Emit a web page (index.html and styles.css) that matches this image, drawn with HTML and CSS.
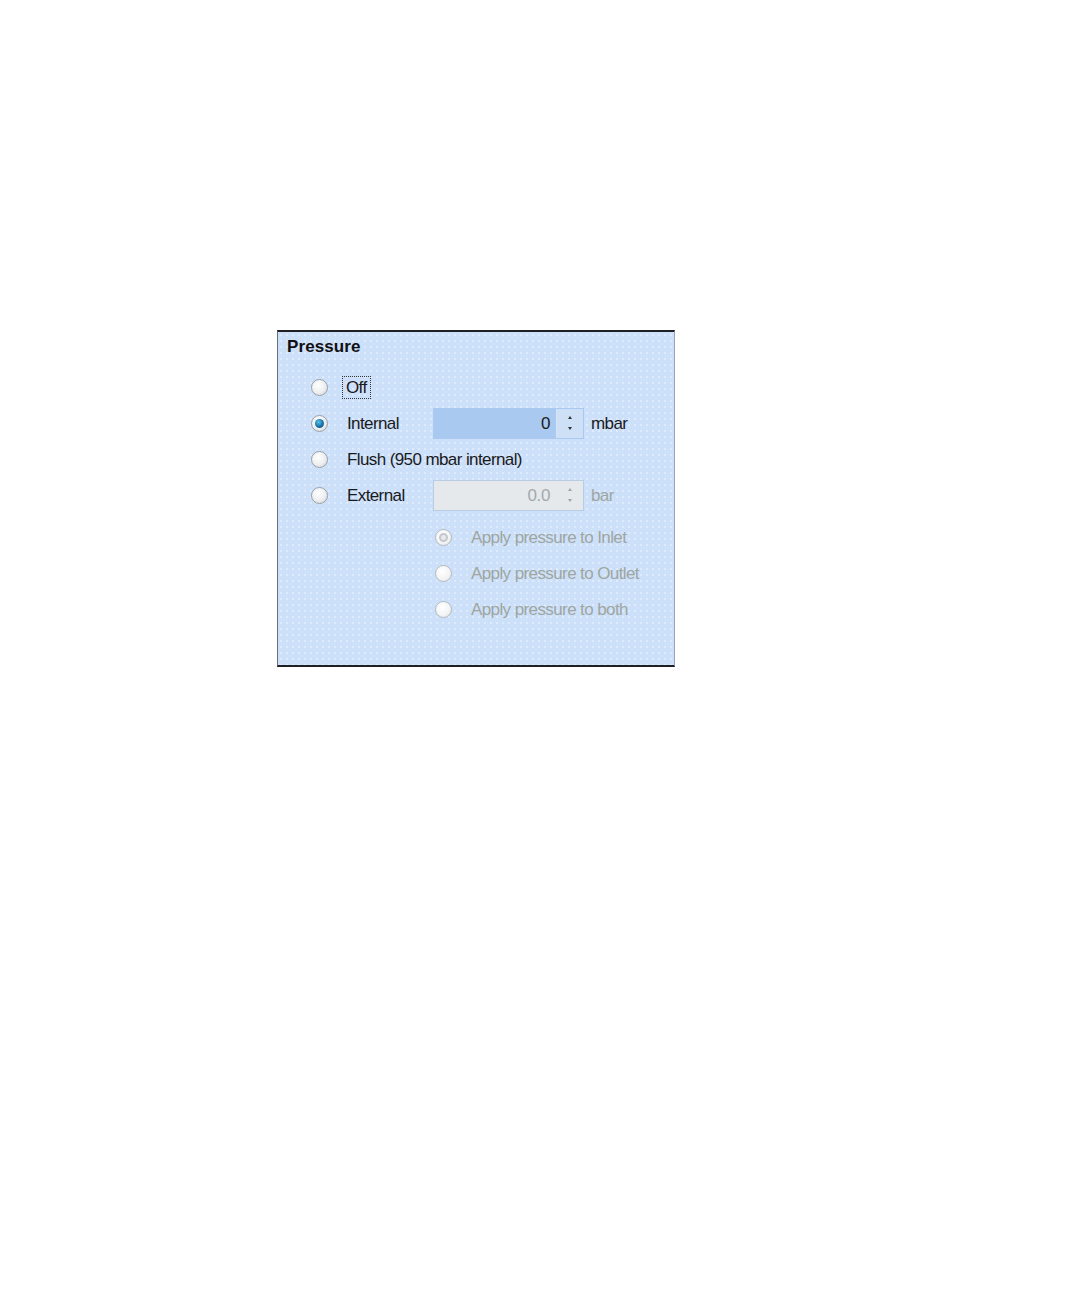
FILE: index.html
```html
<!DOCTYPE html>
<html>
<head>
<meta charset="utf-8">
<link rel="stylesheet" href="styles.css">
</head>
<body>
<div class="page">
  <section class="group">
    <h2 class="title">Pressure</h2>
    <div class="rows">
      <div class="row">
        <span class="radio"></span>
        <span class="label focus">Off</span>
      </div>
      <div class="row">
        <span class="radio checked"></span>
        <span class="label fixed">Internal</span>
        <div class="spin active">
          <span class="value">0</span>
          <span class="arrows"><i class="up"></i><i class="down"></i></span>
        </div>
        <span class="unit">mbar</span>
      </div>
      <div class="row">
        <span class="radio"></span>
        <span class="label">Flush (950 mbar internal)</span>
      </div>
      <div class="row">
        <span class="radio"></span>
        <span class="label fixed">External</span>
        <div class="spin disabled">
          <span class="value">0.0</span>
          <span class="arrows"><i class="up"></i><i class="down"></i></span>
        </div>
        <span class="unit dim">bar</span>
      </div>
    </div>
    <div class="subrows">
      <div class="row">
        <span class="radio dis checked-dis"></span>
        <span class="label dim">Apply pressure to Inlet</span>
      </div>
      <div class="row">
        <span class="radio dis"></span>
        <span class="label dim">Apply pressure to Outlet</span>
      </div>
      <div class="row">
        <span class="radio dis"></span>
        <span class="label dim">Apply pressure to both</span>
      </div>
    </div>
  </section>
</div>
</body>
</html>
```
FILE: styles.css
```css
html, body {
  margin: 0;
  padding: 0;
  background: #ffffff;
}
body {
  font-family: "Liberation Sans", Arial, sans-serif;
  color: #1a1a1a;
}
.page {
  padding: 330px 0 0 277px;
}
.group {
  box-sizing: border-box;
  width: 398px;
  height: 337px;
  border-top: 2px solid #1e2024;
  border-bottom: 2px solid #1e2024;
  border-left: 1px solid #6a707a;
  border-right: 1px solid #9aa4b0;
  background-color: #cde0fa;
  background-image: radial-gradient(circle, rgba(255,255,255,0.35) 0.8px, transparent 1.2px);
  background-size: 6px 6px;
  padding: 4px 0 0 9px;
}
.title {
  margin: 0;
  font-size: 17px;
  font-weight: bold;
  line-height: 22px;
  letter-spacing: 0.1px;
  color: #111;
}
.rows {
  margin-top: 13px;
  padding-left: 24px;
  display: flex;
  flex-direction: column;
  gap: 4px;
}
.row {
  display: flex;
  align-items: center;
  height: 32px;
}
.radio {
  box-sizing: border-box;
  width: 17px;
  height: 17px;
  border-radius: 50%;
  border: 1px solid #9aa0a6;
  background: radial-gradient(circle at 40% 35%, #ffffff 0%, #eceef0 55%, #cfd3d8 100%);
  flex: none;
  position: relative;
}
.radio.checked::after {
  content: "";
  position: absolute;
  left: 3px;
  top: 3px;
  width: 9px;
  height: 9px;
  border-radius: 50%;
  background: radial-gradient(circle at 40% 35%, #5fc0e8 0%, #1a78b0 50%, #0b3f66 100%);
}
.radio.dis {
  border-color: #b4bac0;
  background: radial-gradient(circle at 40% 35%, #ffffff 0%, #f2f3f4 60%, #dcdfe2 100%);
}
.radio.checked-dis::after {
  content: "";
  position: absolute;
  left: 3px;
  top: 3px;
  width: 9px;
  height: 9px;
  border-radius: 50%;
  box-sizing: border-box;
  border: 2px solid #c4c8cc;
  background: #e8eaec;
}
.label {
  margin-left: 19px;
  padding-top: 2px;
  font-size: 17px;
  letter-spacing: -0.6px;
  line-height: 20px;
  white-space: nowrap;
}
.label.fixed {
  width: 86px;
  flex: none;
}
.label.focus {
  margin-left: 15px;
  padding: 1px 3px 0 3px;
  outline: 1px dotted #333;
  outline-offset: 0;
  line-height: 20px;
}
.label.dim, .unit.dim {
  color: #9ea6a0;
}
.spin {
  box-sizing: border-box;
  width: 151px;
  height: 31px;
  display: flex;
  align-items: stretch;
  border: 1px solid #b0c8e6;
  flex: none;
}
.spin .value {
  flex: 1;
  text-align: right;
  padding-right: 6px;
  padding-top: 1px;
  font-size: 17px;
  line-height: 28px;
  letter-spacing: -0.4px;
}
.spin .arrows {
  width: 26px;
  display: flex;
  flex-direction: column;
  align-items: center;
  justify-content: center;
  gap: 8px;
  border-left: 1px solid #c8d8ec;
}
.spin .arrows i {
  display: block;
  width: 0;
  height: 0;
  border-left: 2.5px solid transparent;
  border-right: 2.5px solid transparent;
}
.spin .arrows .up { border-bottom: 3px solid #333; }
.spin .arrows .down { border-top: 3px solid #333; }
.spin.active {
  background: #a9c9f0;
  border-color: #a9c9f0;
}
.spin.active .arrows {
  background: #cde0f6;
  border-left-color: #d6e4f4;
}
.spin.disabled {
  background: #e6e9ec;
  border-color: #b8cce4;
}
.spin.disabled .value { color: #a2a8ae; }
.spin.disabled .arrows { border-left-color: #e6e9ec; }
.spin.disabled .arrows .up { border-bottom-color: #9ea4aa; }
.spin.disabled .arrows .down { border-top-color: #9ea4aa; }
.unit {
  margin-left: 7px;
  padding-top: 2px;
  font-size: 17px;
  letter-spacing: -0.6px;
}
.subrows {
  margin-top: 10px;
  padding-left: 148px;
  display: flex;
  flex-direction: column;
  gap: 4px;
}
```
